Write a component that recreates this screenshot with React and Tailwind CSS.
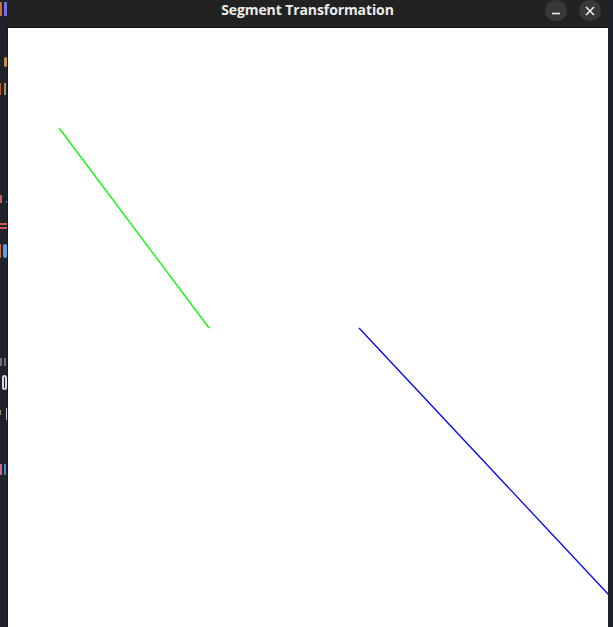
import React from 'react'

// bits of the editor behind the window, clipped to the 7px strip on the left
function EditorSliver() {
  return (
    <div className="w-[7px] h-full bg-[#1f2329] flex flex-col shrink-0 overflow-hidden">
      <div className="mt-[2px] h-[14px] flex gap-[2px]">
        <div className="w-[2px] bg-[#c9703a]" />
        <div className="w-[3px] bg-[#7b6ee0]" />
      </div>
      <div className="mt-[41px] h-[10px] flex justify-end">
        <div className="w-[3px] bg-[#c98a4e] rounded-full" />
      </div>
      <div className="mt-[16px] h-[12px] flex justify-between pr-[1px]">
        <div className="w-[1px] bg-[#c25f2e]" />
        <div className="w-[2px] bg-[#a88a62]" />
      </div>
      <div className="mt-[100px] h-[8px] flex justify-between">
        <div className="w-[2px] bg-[#d0585a]" />
        <div className="w-[1px] h-[2px] mt-[6px] bg-[#4f7fd0]" />
      </div>
      <div className="mt-[20px] h-[6px] flex flex-col justify-between">
        <div className="h-[2px] bg-[#d0585a]" />
        <div className="h-[2px] bg-[#d0585a]" />
      </div>
      <div className="mt-[15px] h-[14px] flex gap-[2px]">
        <div className="w-[1px] bg-[#c9703a]" />
        <div className="w-[4px] bg-[#5aa0e8] rounded-[2px]" />
      </div>
      <div className="mt-[100px] h-[8px] flex justify-between pr-[1px]">
        <div className="w-[2px] bg-[#6b6f76]" />
        <div className="w-[2px] bg-[#6b6f76]" />
      </div>
      <div className="mt-[9px] h-[15px] flex justify-end">
        <div className="w-[5px] border-2 border-[#d6d8dc] rounded-full" />
      </div>
      <div className="mt-[18px] h-[12px] flex justify-between">
        <div className="w-[1px] h-[5px] mt-[2px] bg-[#a88a62]" />
        <div className="w-[1px] bg-[#c8cacf]" />
      </div>
      <div className="mt-[44px] h-[11px] flex justify-between pr-[1px]">
        <div className="w-[2px] bg-[#c66a8a]" />
        <div className="w-[2px] bg-[#4f7fd0]" />
      </div>
    </div>
  )
}

function TitleButton({ children }) {
  return (
    <div className="w-[22px] h-[21px] rounded-full bg-[#383838] flex items-center justify-center">
      {children}
    </div>
  )
}

export default function App() {
  return (
    <div className="w-[613px] h-[627px] flex bg-[#1f2329] overflow-hidden">
      <EditorSliver />

      {/* Window */}
      <div className="w-[601px] h-full flex flex-col shrink-0">
        <div className="h-[28px] shrink-0 bg-[#222222] border-b border-[#0e0e0e] flex items-start relative">
          <div className="absolute inset-x-0 top-[1px] text-center text-[14px] font-bold text-[#ececec] leading-[17px] font-['Open_Sans',sans-serif] tracking-[-0.1px]">
            Segment Transformation
          </div>
          <div className="ml-auto mr-[7px] flex gap-[12px]">
            <TitleButton>
              <svg width="10" height="10" viewBox="0 0 10 10">
                <path d="M1 7.5h8" stroke="#eeeeee" strokeWidth="1.6" />
              </svg>
            </TitleButton>
            <TitleButton>
              <svg width="10" height="10" viewBox="0 0 10 10">
                <path d="M1 1l8 8M9 1l-8 8" stroke="#eeeeee" strokeWidth="1.6" />
              </svg>
            </TitleButton>
          </div>
        </div>

        {/* Canvas */}
        <div className="flex-1 flex border-l border-[#15181c] bg-white overflow-hidden">
          <svg width="600" height="600" viewBox="0 0 600 600" className="overflow-hidden shrink-0">
            <line x1="51" y1="100" x2="201" y2="300" stroke="#00ff00" strokeWidth="1.3" />
            <line x1="351" y1="300" x2="630" y2="598" stroke="#0000ff" strokeWidth="1.3" />
          </svg>
        </div>
      </div>

      <div className="flex-1 bg-[#1f2329]" />
    </div>
  )
}
